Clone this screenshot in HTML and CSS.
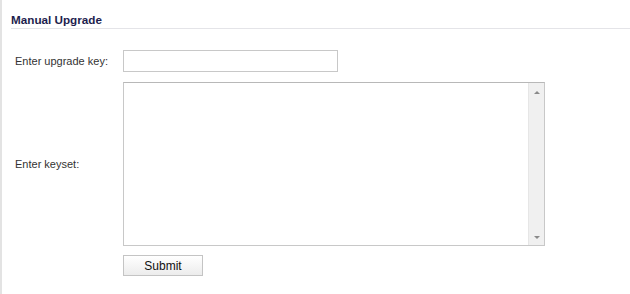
FILE: index.html
```html
<!DOCTYPE html>
<html lang="en">
<head>
  <meta charset="UTF-8" />
  <title>Manual Upgrade</title>
  <link rel="stylesheet" href="styles.css">
</head>
<body>
  <div class="panel">
    <h2 class="title">Manual Upgrade</h2>
    <div class="form">
      <label class="label" for="upgradeKey">Enter upgrade key:</label>
      <div class="field"><input type="text" id="upgradeKey" class="key-input" /></div>

      <label class="label" for="keyset">Enter keyset:</label>
      <div class="field">
        <div class="keyset-box">
          <textarea id="keyset" class="keyset"></textarea>
          <div class="scrollbar">
            <span class="arrow up"></span>
            <span class="arrow down"></span>
          </div>
        </div>
      </div>

      <div></div>
      <div class="field"><button class="submit">Submit</button></div>
    </div>
  </div>
</body>
</html>
```

FILE: styles.css
```css
body {
  margin: 0;
  background: #fff;
  font-family: 'Liberation Sans', Arial, sans-serif;
  font-size: 11px;
  color: #333;
}

.panel {
  height: 294px;
  border-left: 2px solid #e3e3e3;
  padding-left: 9px;
  box-sizing: border-box;
}

.title {
  margin: 0;
  padding: 14px 0 3px;
  font-size: 11.7px;
  font-weight: bold;
  color: #1e1e4e;
  border-bottom: 1px solid #e4e4e8;
  line-height: 11px;
}

.form {
  display: grid;
  grid-template-columns: 112px auto;
  row-gap: 10px;
  margin-top: 21px;
  align-items: center;
}

.label {
  padding-left: 4px;
  color: #333;
}

.field {
  display: flex;
}

.key-input {
  width: 215px;
  height: 22px;
  box-sizing: border-box;
  border: 1px solid #c8c8c8;
  padding: 2px 4px;
  margin: 0;
  font: inherit;
}

.keyset-box {
  display: flex;
  width: 422px;
  height: 164px;
  box-sizing: border-box;
  border: 1px solid #c8c8c8;
  border-top-color: #b8b8b8;
}

.keyset {
  flex: 1;
  border: none;
  resize: none;
  margin: 0;
  padding: 2px 4px;
  font: inherit;
  outline: none;
}

.scrollbar {
  width: 16px;
  background: #f0f0f0;
  border-left: 1px solid #e6e6e6;
  display: flex;
  flex-direction: column;
  justify-content: space-between;
  align-items: center;
  padding: 8px 0 6px;
  box-sizing: border-box;
}

.arrow {
  width: 0;
  height: 0;
  border-left: 3px solid transparent;
  border-right: 3px solid transparent;
}

.arrow.up {
  border-bottom: 3px solid #8a8a8a;
}

.arrow.down {
  border-top: 3px solid #8a8a8a;
}

.submit {
  width: 80px;
  height: 21px;
  margin-top: -1px;
  border: 1px solid #c4c4c4;
  background: linear-gradient(#ffffff, #ececec);
  font-family: 'Liberation Sans', Arial, sans-serif;
  font-size: 12px;
  color: #111;
  padding: 0;
}
```
